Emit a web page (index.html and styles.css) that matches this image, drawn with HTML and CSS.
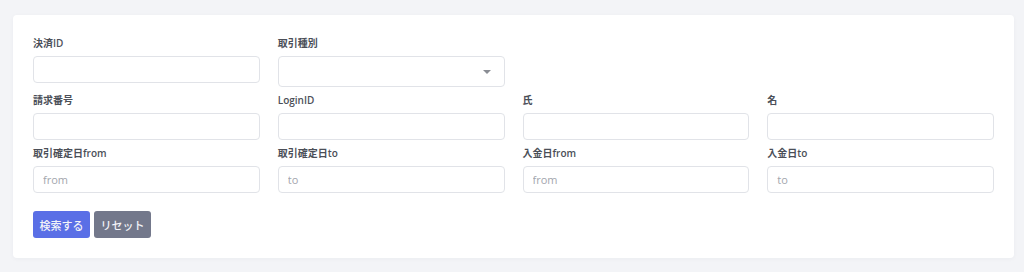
FILE: index.html
```html
<!DOCTYPE html>
<html lang="ja">
<head>
    <meta charset="UTF-8">
    <meta name="viewport" content="width=device-width, initial-scale=1.0">
    <title>決済検索</title>
    <link rel="stylesheet" href="styles.css">
</head>
<body>
    <div class="card">
        <form class="search-form">
            <div class="form-grid">
                <div class="form-group">
                    <label for="payment-id">決済ID</label>
                    <input type="text" id="payment-id">
                </div>
                <div class="form-group">
                    <label for="trade-type">取引種別</label>
                    <div class="select-wrap">
                        <select id="trade-type">
                            <option value=""></option>
                        </select>
                    </div>
                </div>
                <div class="form-group"></div>
                <div class="form-group"></div>

                <div class="form-group">
                    <label for="invoice-no">請求番号</label>
                    <input type="text" id="invoice-no">
                </div>
                <div class="form-group">
                    <label for="login-id">LoginID</label>
                    <input type="text" id="login-id">
                </div>
                <div class="form-group">
                    <label for="last-name">氏</label>
                    <input type="text" id="last-name">
                </div>
                <div class="form-group">
                    <label for="first-name">名</label>
                    <input type="text" id="first-name">
                </div>

                <div class="form-group">
                    <label for="fixed-from">取引確定日from</label>
                    <input type="text" id="fixed-from" placeholder="from">
                </div>
                <div class="form-group">
                    <label for="fixed-to">取引確定日to</label>
                    <input type="text" id="fixed-to" placeholder="to">
                </div>
                <div class="form-group">
                    <label for="paid-from">入金日from</label>
                    <input type="text" id="paid-from" placeholder="from">
                </div>
                <div class="form-group">
                    <label for="paid-to">入金日to</label>
                    <input type="text" id="paid-to" placeholder="to">
                </div>
            </div>

            <div class="actions">
                <button type="submit" class="btn btn-primary">検索する</button>
                <button type="reset" class="btn btn-secondary">リセット</button>
            </div>
        </form>
    </div>
</body>
</html>
```

FILE: styles.css
```css
body {
    margin: 0;
    padding: 15px 10px 14px 13px;
    background: #f3f4f7;
    font-family: 'Open Sans', 'Noto Sans CJK JP', sans-serif;
    color: #4b4f58;
}
.card {
    background: white;
    padding: 20px;
    border-radius: 4px;
    box-shadow: 0 1px 4px rgba(30,40,70,0.04);
}
.form-grid {
    display: grid;
    grid-template-columns: repeat(4, 1fr);
    column-gap: 18px;
    row-gap: 5px;
}
.form-group label {
    display: block;
    height: 16px;
    line-height: 16px;
    margin-bottom: 5px;
    font-size: 10px;
    font-weight: 600;
    color: #4b4f58;
}
input, select {
    display: block;
    width: 100%;
    height: 27px;
    padding: 0 9px;
    border: 1px solid #e1e3e8;
    border-radius: 4px;
    font-family: inherit;
    font-size: 11px;
    color: #4b4f58;
    background: white;
    box-sizing: border-box;
    outline: none;
}
input::placeholder {
    color: #a3a6ad;
}
.select-wrap {
    position: relative;
}
select {
    height: 31px;
    appearance: none;
    -webkit-appearance: none;
}
.select-wrap::after {
    content: '';
    position: absolute;
    right: 14px;
    top: 14px;
    border-left: 4px solid transparent;
    border-right: 4px solid transparent;
    border-top: 4px solid #8a8d94;
    pointer-events: none;
}
.actions {
    display: flex;
    gap: 4px;
    margin-top: 18px;
}
.btn {
    height: 27px;
    width: 57px;
    padding: 0;
    border: none;
    border-radius: 3px;
    font-family: inherit;
    font-size: 11px;
    font-weight: 500;
    color: #f2f3f8;
    cursor: pointer;
}
.btn-primary {
    background: #5a6fe6;
}
.btn-secondary {
    background: #73788b;
}
```
